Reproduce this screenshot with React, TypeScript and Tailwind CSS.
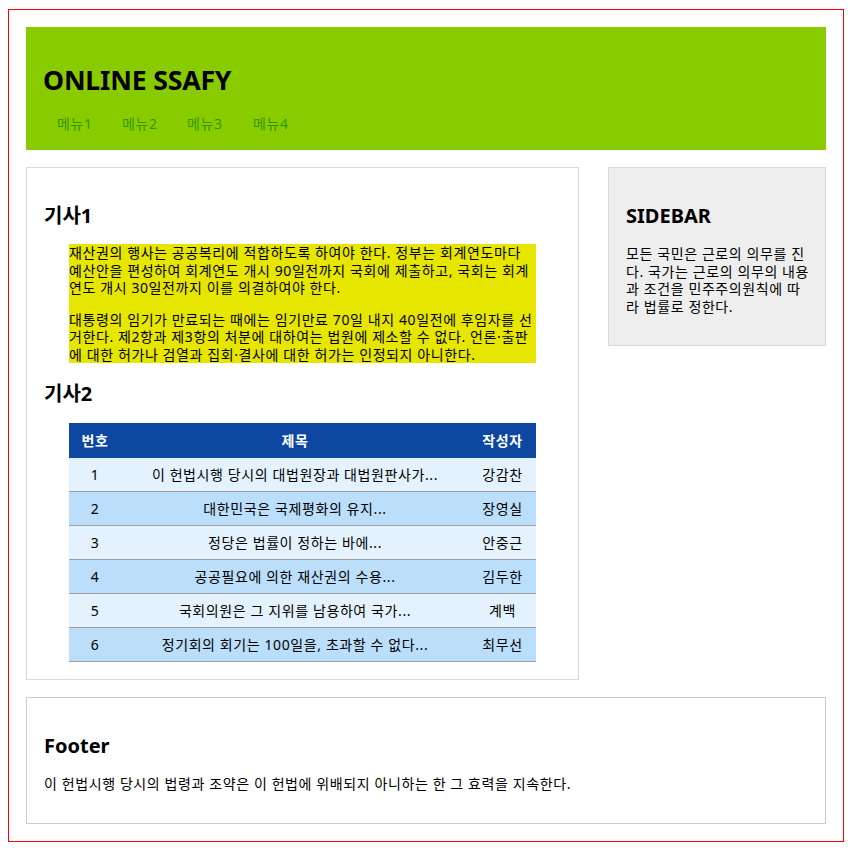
import React from "react";

const rows = [
  ["1", "이 헌법시행 당시의 대법원장과 대법원판사가...", "강감찬"],
  ["2", "대한민국은 국제평화의 유지...", "장영실"],
  ["3", "정당은 법률이 정하는 바에...", "안중근"],
  ["4", "공공필요에 의한 재산권의 수용...", "김두한"],
  ["5", "국회의원은 그 지위를 남용하여 국가...", "계백"],
  ["6", "정기회의 회기는 100일을, 초과할 수 없다...", "최무선"],
];

function H2({ children, className = "" }: { children: React.ReactNode; className?: string }) {
  return (
    <h2 className={"mt-[17px] h-[27px] text-[20px] leading-[27px] font-bold tracking-normal text-black " + className}>
      {children}
    </h2>
  );
}

export default function App() {
  return (
    <div className="min-h-[851px] bg-white pt-[9px] pl-[8px] font-['Noto_Sans','Noto_Sans_CJK_KR',sans-serif] text-[14px] leading-[17.5px] tracking-[0.6px] text-black">
      <div className="flex w-[836px] flex-col gap-[17px] border border-[#ff0000] p-[17px]">
        {/* Header */}
        <header className="h-[123px] bg-[#88cc00] px-[17px] pt-[35px]">
          <h1 className="h-[36px] text-[26.67px] leading-[36px] font-bold tracking-[-0.2px] text-black">ONLINE SSAFY</h1>
          <nav className="mt-[17px] flex h-[18px] pl-[14px] text-[#339900]">
            <a className="w-[65px]">메뉴1</a>
            <a className="w-[65px]">메뉴2</a>
            <a className="w-[66px]">메뉴3</a>
            <a className="w-[65px]">메뉴4</a>
          </nav>
        </header>

        {/* Main */}
        <div className="flex items-start justify-between">
          <article className="w-[553px] border border-[#d9d9d9] p-[17px]">
            <H2 className="mb-[15px]">기사1</H2>
            <div className="mx-[25px] bg-[#e6e600] whitespace-nowrap">
              <p>
                재산권의 행사는 공공복리에 적합하도록 하여야 한다. 정부는 회계연도마다
                <br />
                예산안을 편성하여 회계연도 개시 90일전까지 국회에 제출하고, 국회는 회계
                <br />
                연도 개시 30일전까지 이를 의결하여야 한다.
              </p>
              <p className="mt-[14px]">
                대통령의 임기가 만료되는 때에는 임기만료 70일 내지 40일전에 후임자를 선
                <br />
                거한다. 제2항과 제3항의 처분에 대하여는 법원에 제소할 수 없다. 언론·출판
                <br />
                에 대한 허가나 검열과 집회·결사에 대한 허가는 인정되지 아니한다.
              </p>
            </div>
            <H2 className="mb-[16px]">기사2</H2>
            <table className="mx-[25px] w-[467px] border-separate border-spacing-0">
              <thead>
                <tr className="bg-[#0d47a1] text-white">
                  <th className="h-[35px] w-[52px] p-0 text-center font-bold">번호</th>
                  <th className="h-[35px] p-0 text-center font-bold">제목</th>
                  <th className="h-[35px] w-[67px] p-0 text-center font-bold">작성자</th>
                </tr>
              </thead>
              <tbody>
                {rows.map((r, i) => (
                  <tr key={r[0]} className={i % 2 === 0 ? "bg-[#e3f2fd]" : "bg-[#bbdefb]"}>
                    <td className="h-[34px] border-b border-[#9e9e9e] p-0 text-center">{r[0]}</td>
                    <td className="h-[34px] border-b border-[#9e9e9e] p-0 text-center">{r[1]}</td>
                    <td className="h-[34px] border-b border-[#9e9e9e] p-0 text-center">{r[2]}</td>
                  </tr>
                ))}
              </tbody>
            </table>
          </article>

          <aside className="w-[218px] border border-[#d9d9d9] bg-[#eeeeee] p-[17px]">
            <H2 className="mb-[16px]">SIDEBAR</H2>
            <p className="mb-[13px] whitespace-nowrap">
              모든 국민은 근로의 의무를 진
              <br />
              다. 국가는 근로의 의무의 내용
              <br />
              과 조건을 민주주의원칙에 따
              <br />
              라 법률로 정한다.
            </p>
          </aside>
        </div>

        {/* Footer */}
        <footer className="border border-[#cccccc] p-[17px]">
          <H2 className="mb-[16px]">Footer</H2>
          <p className="mb-[13px]">이 헌법시행 당시의 법령과 조약은 이 헌법에 위배되지 아니하는 한 그 효력을 지속한다.</p>
        </footer>
      </div>
    </div>
  );
}
